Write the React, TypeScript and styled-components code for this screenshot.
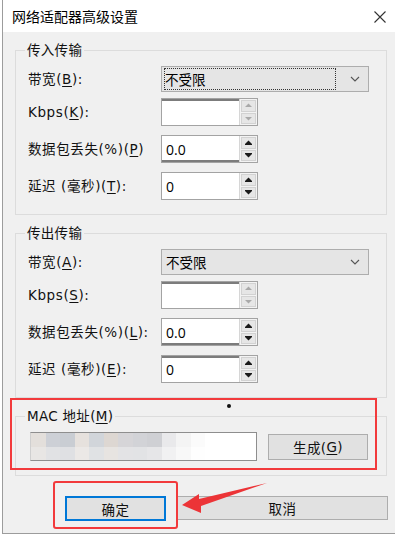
import * as React from 'react';
import styled, { createGlobalStyle } from 'styled-components';

// --- Global ---

const GlobalStyle = createGlobalStyle`
  html, body {
    margin: 0;
    padding: 0;
    background: #ffffff;
  }
  body {
    font-family: "Noto Sans CJK SC", "Noto Sans", sans-serif;
  }
`;

const FONT = `"Noto Sans CJK SC", "Noto Sans", sans-serif`;
// wide latin glyphs, chinese falls through to Noto CJK
const UI_FONT = `"DejaVu Sans", "Noto Sans CJK SC", sans-serif`;

// --- Window frame ---

const Window = styled.div`
  position: relative;
  margin-left: 2px;
  width: 393px;
  height: 534px;
  box-sizing: border-box;
  border-left: 1px solid #9c9c9c;
  border-bottom: 1px solid #9c9c9c;
  background: #f0f0f0;
  display: flex;
  flex-direction: column;
  font-family: ${FONT};
  color: #000;
  overflow: hidden;
`;

const TitleBar = styled.div`
  flex: none;
  height: 32px;
  background: #ffffff;
  display: flex;
  align-items: center;
  justify-content: space-between;
  padding: 0 9px 0 9px;
  font-size: 14px;
  color: #000;
`;

const CloseButton = styled.div`
  width: 12px;
  height: 12px;
  display: flex;
  margin-top: 1px;
`;

const Body = styled.div`
  flex: 1;
  padding: 9px 8px 0 12px;
  display: flex;
  flex-direction: column;
`;

// --- Group boxes ---

const Group = styled.fieldset<{ $space?: number }>`
  margin: ${p => p.$space || 0}px 0 0 0;
  padding: 7px 0 14px 0;
  min-width: 0;
  border: 1px solid #dcdcdc;
  border-radius: 0;
`;

const Legend = styled.legend`
  margin-left: 9px;
  padding: 0 2px;
  font-family: ${UI_FONT};
  font-size: 13.5px;
  line-height: 18px;
  letter-spacing: 0.3px;
  color: #111;
  u {
    text-decoration: underline;
    text-underline-offset: 2px;
  }
`;

const Row = styled.div<{ $space?: number; $indent?: number }>`
  display: flex;
  align-items: center;
  padding-left: ${p => p.$indent || 12}px;
  margin-top: ${p => p.$space || 0}px;
`;

const Label = styled.div`
  flex: none;
  width: 133px;
  font-family: ${UI_FONT};
  font-size: 13.5px;
  line-height: 18px;
  letter-spacing: 0.6px;
  color: #111;
  white-space: nowrap;
  u {
    text-decoration: underline;
    text-underline-offset: 2px;
  }
`;

// --- Combobox ---

const Combo = styled.div`
  flex: none;
  width: 208px;
  height: 26px;
  box-sizing: border-box;
  border: 1px solid #adadad;
  background: #e5e5e5;
  display: flex;
  align-items: center;
  padding: 0 8px 0 2px;
  font-size: 13.5px;
`;

const ComboText = styled.div<{ $focus?: boolean }>`
  flex: 1;
  height: 22px;
  box-sizing: border-box;
  display: flex;
  align-items: center;
  padding-left: ${p => (p.$focus ? 0 : 1)}px;
  margin-right: 14px;
  border: 1px dotted ${p => (p.$focus ? '#333' : 'transparent')};
`;

const Chevron = () => (
  <svg width="10" height="6" viewBox="0 0 10 6">
    <polyline points="1,1 5,5 9,1" fill="none" stroke="#555" strokeWidth="1.1" />
  </svg>
);

// --- Spinner ---

const Spinner = styled.div`
  flex: none;
  width: 97px;
  height: 28px;
  box-sizing: border-box;
  border: 1px solid #a3a3a3;
  background: #f3f3f3;
  display: flex;
`;

const SpinInput = styled.div<{ $edge?: 'top' | 'bottom' }>`
  flex: 1;
  background: #ffffff;
  display: flex;
  align-items: center;
  padding-left: 4px;
  font-family: "Open Sans", "Noto Sans", sans-serif;
  font-size: 14px;
  box-shadow: ${p =>
    p.$edge === 'top'
      ? 'inset 0 2px 0 #7c7c7c'
      : p.$edge === 'bottom'
      ? 'inset 0 -2px 0 #7c7c7c'
      : 'none'};
`;

const SpinColumn = styled.div`
  flex: none;
  width: 18px;
  display: flex;
  flex-direction: column;
  gap: 1px;
  padding: 1px;
  box-sizing: border-box;
  border-left: 1px solid #d6d6d6;
`;

const SpinButton = styled.div`
  flex: 1;
  background: #e6e6e6;
  border: 1px solid #d2d2d2;
  display: flex;
  align-items: center;
  justify-content: center;
`;

const Arrow = ({ up, on }: { up?: boolean; on?: boolean }) => (
  <svg width="7" height="5" viewBox="0 0 7 5">
    <polygon
      points={up ? '0,4 3.5,0.5 7,4' : '0,1 3.5,4.5 7,1'}
      fill={on ? '#1a1a1a' : '#a9a9a9'}
    />
    {on && (
      <rect x="0" y={up ? 4 : 0} width="7" height="1" fill="#1a1a1a" />
    )}
  </svg>
);

type SpinProps = { value?: string; on?: boolean; edge?: 'top' | 'bottom' };

const Spin = ({ value, on, edge }: SpinProps) => (
  <Spinner>
    <SpinInput $edge={edge}>{value}</SpinInput>
    <SpinColumn>
      <SpinButton><Arrow up on={on} /></SpinButton>
      <SpinButton><Arrow on={on} /></SpinButton>
    </SpinColumn>
  </Spinner>
);

// --- MAC address ---

const MacInput = styled.div`
  flex: none;
  width: 227px;
  height: 29px;
  box-sizing: border-box;
  border: 1px solid #8e8e8e;
  border-left-color: #cfcfcf;
  background: #ffffff;
  display: grid;
  grid-template-columns: repeat(12, 14.5px) 1fr;
  grid-template-rows: 1fr 1fr;
  overflow: hidden;
`;

const Tile = styled.span<{ $c: string }>`
  background: ${p => p.$c};
`;

const mosaic = [
  ['#e3dfdb', '#cdd0d6', '#c9cdd3', '#e6e1dd', '#d1d5da', '#ddd7d2', '#d6d5d8', '#d2d3d7', '#cfd0d4', '#e9e9eb', '#f4f4f4', '#fbfbfb'],
  ['#e8e6e4', '#e1e2e4', '#dfe0e3', '#ebe8e6', '#e0e2e4', '#e7e4e1', '#e3e3e5', '#e2e3e5', '#e6e6e8', '#f1f1f2', '#f8f8f8', '#fefefe'],
];

const PushButton = styled.div<{ $primary?: boolean; $w: number; $h: number; $gap?: number }>`
  flex: none;
  width: ${p => p.$w}px;
  height: ${p => p.$h}px;
  margin-left: ${p => p.$gap || 0}px;
  box-sizing: border-box;
  background: #e1e1e1;
  border: ${p => (p.$primary ? '2px solid #0078d7' : '1px solid #adadad')};
  display: flex;
  align-items: center;
  justify-content: center;
  font-family: ${UI_FONT};
  font-size: 13.5px;
  letter-spacing: 0.4px;
  color: #111;
  u {
    text-decoration: underline;
    text-underline-offset: 2px;
  }
`;

const ButtonRow = styled.div`
  display: flex;
  gap: 11px;
  margin-top: 20px;
  padding-left: 50px;
`;

// --- Annotation overlays ---

const RedFrame = styled.div<{ $x: number; $y: number; $w: number; $h: number; $r?: number }>`
  position: absolute;
  left: ${p => p.$x}px;
  top: ${p => p.$y}px;
  width: ${p => p.$w}px;
  height: ${p => p.$h}px;
  box-sizing: border-box;
  border: 2px solid #f23a3c;
  border-radius: ${p => p.$r || 0}px;
  pointer-events: none;
`;

const ArrowMark = styled.svg`
  position: absolute;
  left: 175px;
  top: 478px;
`;

const Dot = styled.div`
  position: absolute;
  left: 224px;
  top: 404px;
  width: 4px;
  height: 4px;
  border-radius: 50%;
  background: #111;
`;

type TransferProps = {
  title: string;
  keys: [string, string, string, string];
  focus?: boolean;
  edges: ('top' | 'bottom' | undefined)[];
  space?: number;
};

const TransferGroup = ({ title, keys, focus, edges, space }: TransferProps) => (
  <Group $space={space}>
    <Legend>{title}</Legend>
    <Row>
      <Label>带宽(<u>{keys[0]}</u>):</Label>
      <Combo>
        <ComboText $focus={focus}>不受限</ComboText>
        <Chevron />
      </Combo>
    </Row>
    <Row $space={6}>
      <Label>Kbps(<u>{keys[1]}</u>):</Label>
      <Spin edge={edges[0]} />
    </Row>
    <Row $space={9}>
      <Label>数据包丢失(%)(<u>{keys[2]}</u>){keys[2] === 'L' ? ':' : ''}</Label>
      <Spin value="0.0" on edge={edges[1]} />
    </Row>
    <Row $space={9}>
      <Label>延迟 (毫秒)(<u>{keys[3]}</u>):</Label>
      <Spin value="0" on edge={edges[2]} />
    </Row>
  </Group>
);

export default function App() {
  return (
    <>
      <GlobalStyle />
      <Window>
        <TitleBar>
          <span>网络适配器高级设置</span>
          <CloseButton>
            <svg width="12" height="12" viewBox="0 0 12 12">
              <path d="M0.5 0.5 L11.5 11.5 M11.5 0.5 L0.5 11.5" stroke="#333" strokeWidth="1.1" />
            </svg>
          </CloseButton>
        </TitleBar>
        <Body>
          <TransferGroup title="传入传输" keys={['B', 'K', 'P', 'T']} focus edges={['top', 'bottom', undefined]} />
          <TransferGroup title="传出传输" keys={['A', 'S', 'L', 'E']} edges={['top', 'bottom', 'top']} space={9} />
          <Group $space={9}>
            <Legend>MAC 地址(<u>M</u>)</Legend>
            <Row $indent={14}>
              <MacInput>
                {mosaic.map((row, r) => (
                  <React.Fragment key={r}>
                    {row.map((c, i) => <Tile key={i} $c={c} />)}
                    <Tile $c="#ffffff" />
                  </React.Fragment>
                ))}
              </MacInput>
              <PushButton $w={100} $h={26} $gap={11}>
                生成(<u>G</u>)
              </PushButton>
            </Row>
          </Group>
          <ButtonRow>
            <PushButton $primary $w={101} $h={25}>确定</PushButton>
            <PushButton $w={211} $h={24}>取消</PushButton>
          </ButtonRow>
        </Body>

        <Dot />
        <RedFrame $x={7} $y={398} $w={367} $h={72} />
        <RedFrame $x={50} $y={481} $w={125} $h={48} $r={3} />
        <ArrowMark width="95" height="40" viewBox="0 0 95 40">
          <polygon points="4,27 21,16 21,21 89,5 23,28 23,35" fill="#ec3437" />
        </ArrowMark>
      </Window>
    </>
  );
}
